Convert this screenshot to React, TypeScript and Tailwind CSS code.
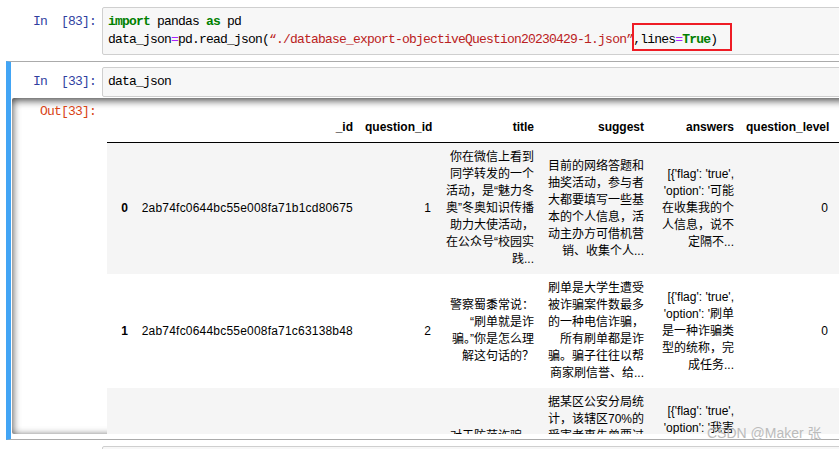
import React from "react";

const mono = "font-['Liberation_Mono','DejaVu_Sans_Mono',monospace]";

type Row = {
  idx: string;
  id: string;
  qid: string;
  title: string[];
  suggest: string[];
  answers: string[];
  level: string;
  striped: boolean;
};

const rows: Row[] = [
  {
    idx: "0",
    id: "2ab74fc0644bc55e008fa71b1cd80675",
    qid: "1",
    title: [
      "你在微信上看到",
      "同学转发的一个",
      "活动，是“魅力冬",
      "奥”冬奥知识传播",
      "助力大使活动，",
      "在公众号“校园实",
      "践...",
    ],
    suggest: [
      "目前的网络答题和",
      "抽奖活动，参与者",
      "大都要填写一些基",
      "本的个人信息，活",
      "动主办方可借机营",
      "销、收集个人...",
    ],
    answers: [
      "[{'flag': 'true',",
      "'option': '可能",
      "在收集我的个",
      "人信息，说不",
      "定隔不...",
    ],
    level: "0",
    striped: true,
  },
  {
    idx: "1",
    id: "2ab74fc0644bc55e008fa71c63138b48",
    qid: "2",
    title: ["警察蜀黍常说：", "“刷单就是诈", "骗。”你是怎么理", "解这句话的？"],
    suggest: [
      "刷单是大学生遭受",
      "被诈骗案件数最多",
      "的一种电信诈骗，",
      "所有刷单都是诈",
      "骗。骗子往往以帮",
      "商家刷信誉、给...",
    ],
    answers: [
      "[{'flag': 'true',",
      "'option': '刷单",
      "是一种诈骗类",
      "型的统称，完",
      "成任务...",
    ],
    level: "0",
    striped: false,
  },
  {
    idx: "2",
    id: "2ab74fc0644bc55e008fa71c7a2d1f03",
    qid: "3",
    title: ["对于防范诈骗，", "你有什么建议？"],
    suggest: [
      "据某区公安分局统",
      "计，该辖区70%的",
      "受害者事先曾要过",
      "反诈中心的宣传资",
      "料，但是仍然被骗",
      "了，原因是...",
    ],
    answers: [
      "[{'flag': 'true',",
      "'option': '我害",
      "怕被骗，所以",
      "不会轻易相信",
      "陌生人...",
    ],
    level: "0",
    striped: true,
  },
];

function Lines({ lines }: { lines: string[] }) {
  return (
    <>
      {lines.map((l, i) => (
        <div key={i} className="whitespace-nowrap">
          {l}
        </div>
      ))}
    </>
  );
}

export default function App() {
  const th =
    "px-[6px] py-[6px] text-right align-bottom font-bold leading-[17px] border-b border-black whitespace-nowrap";
  const td = "px-[6px] py-[6px] text-right align-middle leading-[17px]";
  return (
    <div className="relative w-[839px] h-[449px] overflow-hidden bg-white">
      <div className="w-[1000px] pt-[1px]">
        {/* Cell 1 */}
        <div className="ml-[6px] border border-transparent p-[5px] flex">
          <div
            className={`${mono} w-[90px] shrink-0 pr-[6px] pt-[6px] text-right text-[13px] tracking-[-0.8px] leading-[18px] text-[#303f9f] whitespace-pre`}
          >
            {"In\u00a0\u00a0[83]:"}
          </div>
          <div className="flex-1 border border-[#cfcfcf] bg-[#f7f7f7] rounded-[2px] p-[5px]">
            <div
              className={`${mono} text-[13px] tracking-[-0.8px] leading-[18px] text-black whitespace-pre`}
            >
              <div>
                <span className="font-bold text-[#008000]">import</span> pandas{" "}
                <span className="font-bold text-[#008000]">as</span> pd
              </div>
              <div>
                data_json<span className="text-[#aa22ff]">=</span>pd.read_json(
                <span className="text-[#ba2121]">
                  “./database_export-objectiveQuestion20230429-1.json”
                </span>
                <span className="relative">
                  ,lines<span className="text-[#aa22ff]">=</span>
                  <span className="font-bold text-[#008000]">True</span>)
                  <span className="absolute left-[-1px] right-[-15px] top-[-9px] bottom-[-4px] border-2 border-[#ee1c25]" />
                </span>
              </div>
            </div>
          </div>
        </div>

        {/* Cell 2 (selected) */}
        <div className="ml-[6px] border border-[#ababab] border-l-[5px] border-l-[#42a5f5] pl-[1px] pr-[5px] py-[5px]">
          <div className="flex">
            <div
              className={`${mono} w-[90px] shrink-0 pr-[6px] pt-[6px] text-right text-[13px] tracking-[-0.8px] leading-[18px] text-[#303f9f] whitespace-pre`}
            >
              {"In\u00a0\u00a0[33]:"}
            </div>
            <div className="flex-1 border border-[#cfcfcf] bg-[#f7f7f7] rounded-[2px] p-[5px]">
              <div
                className={`${mono} text-[13px] tracking-[-0.8px] leading-[18px] text-black whitespace-pre`}
              >
                data_json
              </div>
            </div>
          </div>
          <div className="mt-[1px] h-[336px] overflow-hidden rounded-[2px] shadow-[inset_0_2px_8px_rgba(0,0,0,0.8)] flex">
            <div
              className={`${mono} w-[90px] shrink-0 pr-[6px] pt-[5px] text-right text-[13px] tracking-[-0.8px] leading-[18px] text-[#d84315] whitespace-pre`}
            >
              Out[33]:
            </div>
            <div className="pl-[5px] pt-[15px]">
              <table className="border-collapse table-fixed w-[827px] text-[12px] text-black font-['Liberation_Sans','Noto_Sans_CJK_SC',sans-serif]">
                <colgroup>
                  <col className="w-[27px]" />
                  <col className="w-[225px]" />
                  <col className="w-[78px]" />
                  <col className="w-[103px]" />
                  <col className="w-[110px]" />
                  <col className="w-[90px]" />
                  <col className="w-[94px]" />
                  <col className="w-[100px]" />
                </colgroup>
                <thead>
                  <tr>
                    <th className={th}></th>
                    <th className={th}>_id</th>
                    <th className={th}>question_id</th>
                    <th className={th}>title</th>
                    <th className={th}>suggest</th>
                    <th className={th}>answers</th>
                    <th className={th}>question_level</th>
                    <th className={th}></th>
                  </tr>
                </thead>
                <tbody>
                  {rows.map((r) => (
                    <tr key={r.idx} className={r.striped ? "bg-[#f5f5f5]" : "bg-white"}>
                      <th className={`${td} font-bold`}>{r.idx}</th>
                      <td className={`${td} whitespace-nowrap tracking-[0.2px]`}>{r.id}</td>
                      <td className={td}>{r.qid}</td>
                      <td className={td}>
                        <Lines lines={r.title} />
                      </td>
                      <td className={td}>
                        <Lines lines={r.suggest} />
                      </td>
                      <td className={td}>
                        <Lines lines={r.answers} />
                      </td>
                      <td className={td}>{r.level}</td>
                      <td className={td}></td>
                    </tr>
                  ))}
                </tbody>
              </table>
            </div>
          </div>
        </div>

        {/* Cell 3 */}
        <div className="ml-[6px] border border-transparent p-[5px] flex">
          <div className="w-[90px] shrink-0" />
          <div className="flex-1 h-[30px] border border-[#cfcfcf] bg-[#f7f7f7] rounded-[2px]" />
        </div>
      </div>

      <div className="absolute left-[707px] top-[424px] text-[14px] leading-[18px] text-[#bcbcbc] font-['Liberation_Sans','Noto_Sans_CJK_SC',sans-serif] whitespace-nowrap">
        CSDN @Maker 张
      </div>
    </div>
  );
}
